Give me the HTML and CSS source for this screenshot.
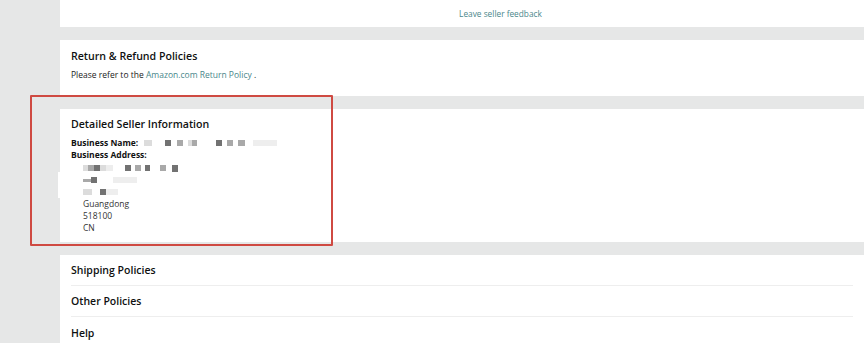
FILE: index.html
```html
<!DOCTYPE html>
<html>
<head>
<meta charset="utf-8">
<link rel="stylesheet" href="styles.css">
</head>
<body>
<div class="page">
  <section class="panel feedback">
    <a class="link">Leave seller feedback</a>
  </section>
  <section class="panel returns">
    <h2 class="title">Return &amp; Refund Policies</h2>
    <p class="text">Please refer to the <a class="link">Amazon.com Return Policy</a> .</p>
  </section>
  <section class="panel seller">
    <h2 class="title">Detailed Seller Information</h2>
    <div class="row"><b>Business Name:</b> <span class="blur">
      <i class="px l" style="width:8px;margin-left:3px"></i><i class="px d" style="width:6px;margin-left:13px"></i><i class="px m" style="width:6px;margin-left:6px"></i><i class="px l" style="width:4px;margin-left:5px"></i><i class="px m" style="width:5px"></i><i class="px d" style="width:6px;margin-left:19px"></i><i class="px m" style="width:6px;margin-left:5px"></i><i class="px m" style="width:7px;margin-left:5px"></i><i class="px xl" style="width:24px;margin-left:8px"></i></span></div>
    <div class="row"><b>Business Address:</b></div>
    <div class="address">
      <div class="aline"><span class="blur"><i class="px l" style="width:5px"></i><i class="px m" style="width:6px"></i><i class="px d" style="width:6px"></i><i class="px l" style="width:6px"></i><i class="px l" style="width:7px;opacity:.5"></i><i class="px d" style="width:6px;margin-left:12px"></i><i class="px m" style="width:6px;margin-left:4px"></i><i class="px d" style="width:5px;margin-left:4px"></i><i class="px m" style="width:6px;margin-left:10px"></i><i class="px d" style="width:6px;margin-left:6px;height:7px"></i></span></div>
      <div class="aline"><span class="blur"><i class="px m" style="width:8px;height:3px"></i><i class="px d" style="width:6px"></i><i class="px xl" style="width:24px;margin-left:16px"></i></span></div>
      <div class="aline"><span class="blur"><i class="px l" style="width:9px"></i><i class="px d" style="width:6px;margin-left:8px"></i><i class="px xl" style="width:12px"></i></span></div>
      <div class="aline">Guangdong</div>
      <div class="aline">518100</div>
      <div class="aline">CN</div>
    </div>
    <div class="smear"></div>
  </section>
  <section class="panel list">
    <div class="item">Shipping Policies</div>
    <div class="item">Other Policies</div>
    <div class="item last">Help</div>
  </section>
  <div class="highlight"></div>
</div>
</body>
</html>
```
FILE: styles.css
```css
* { box-sizing: border-box; }
html, body { margin: 0; padding: 0; }
body {
  background: #e6e7e7;
  font-family: "Open Sans", "Liberation Sans", sans-serif;
  color: #111;
  width: 864px;
  height: 343px;
  overflow: hidden;
}
.page {
  position: relative;
  margin-left: 60px;
  display: flex;
  flex-direction: column;
  gap: 13px;
}
.panel {
  background: #fff;
  padding: 0 11px;
  position: relative;
}
.link { color: #4a878b; text-decoration: none; }
.feedback {
  height: 27px;
  display: flex;
  align-items: center;
  justify-content: center;
  font-size: 8.3px;
  padding-left: 88px;
}
.title {
  margin: 0;
  font-size: 10.6px;
  font-weight: 600;
  line-height: 14px;
  color: #0f1111;
}
.returns { height: 56px; padding-top: 9px; }
.text { margin: 6px 0 0; font-size: 8.5px; line-height: 12px; color: #222; }
.seller { height: 133px; padding-top: 8px; }
.seller .title { margin-bottom: 6px; }
.row { font-size: 8.5px; line-height: 12px; display: flex; align-items: center; gap: 3px; }
.row b { font-weight: 700; }
.address { padding-left: 12px; margin-top: 1px; }
.aline { font-size: 8.5px; line-height: 12px; height: 12px; color: #333; display: flex; align-items: center; }
.blur { display: inline-flex; align-items: center; }
.px { display: inline-block; height: 6px; }
.px.xl { background: #eeeeee; }
.px.l { background: #dcdcdc; }
.px.m { background: #a9a9a9; }
.px.d { background: #727272; }
.smear { position: absolute; left: -2px; top: 63px; width: 14px; height: 26px; background: #fff; }
.list { height: 100px; padding-top: 0; }
.item {
  height: 31px;
  display: flex;
  align-items: center;
  font-size: 10.5px;
  font-weight: 600;
  color: #0f1111;
  border-bottom: 1px solid #eee;
}
.item.last { border-bottom: none; }
.highlight {
  position: absolute;
  left: -30px;
  top: 95px;
  width: 303px;
  height: 151px;
  border: 2px solid #cf4a42;
  border-radius: 1px;
  pointer-events: none;
}
```
